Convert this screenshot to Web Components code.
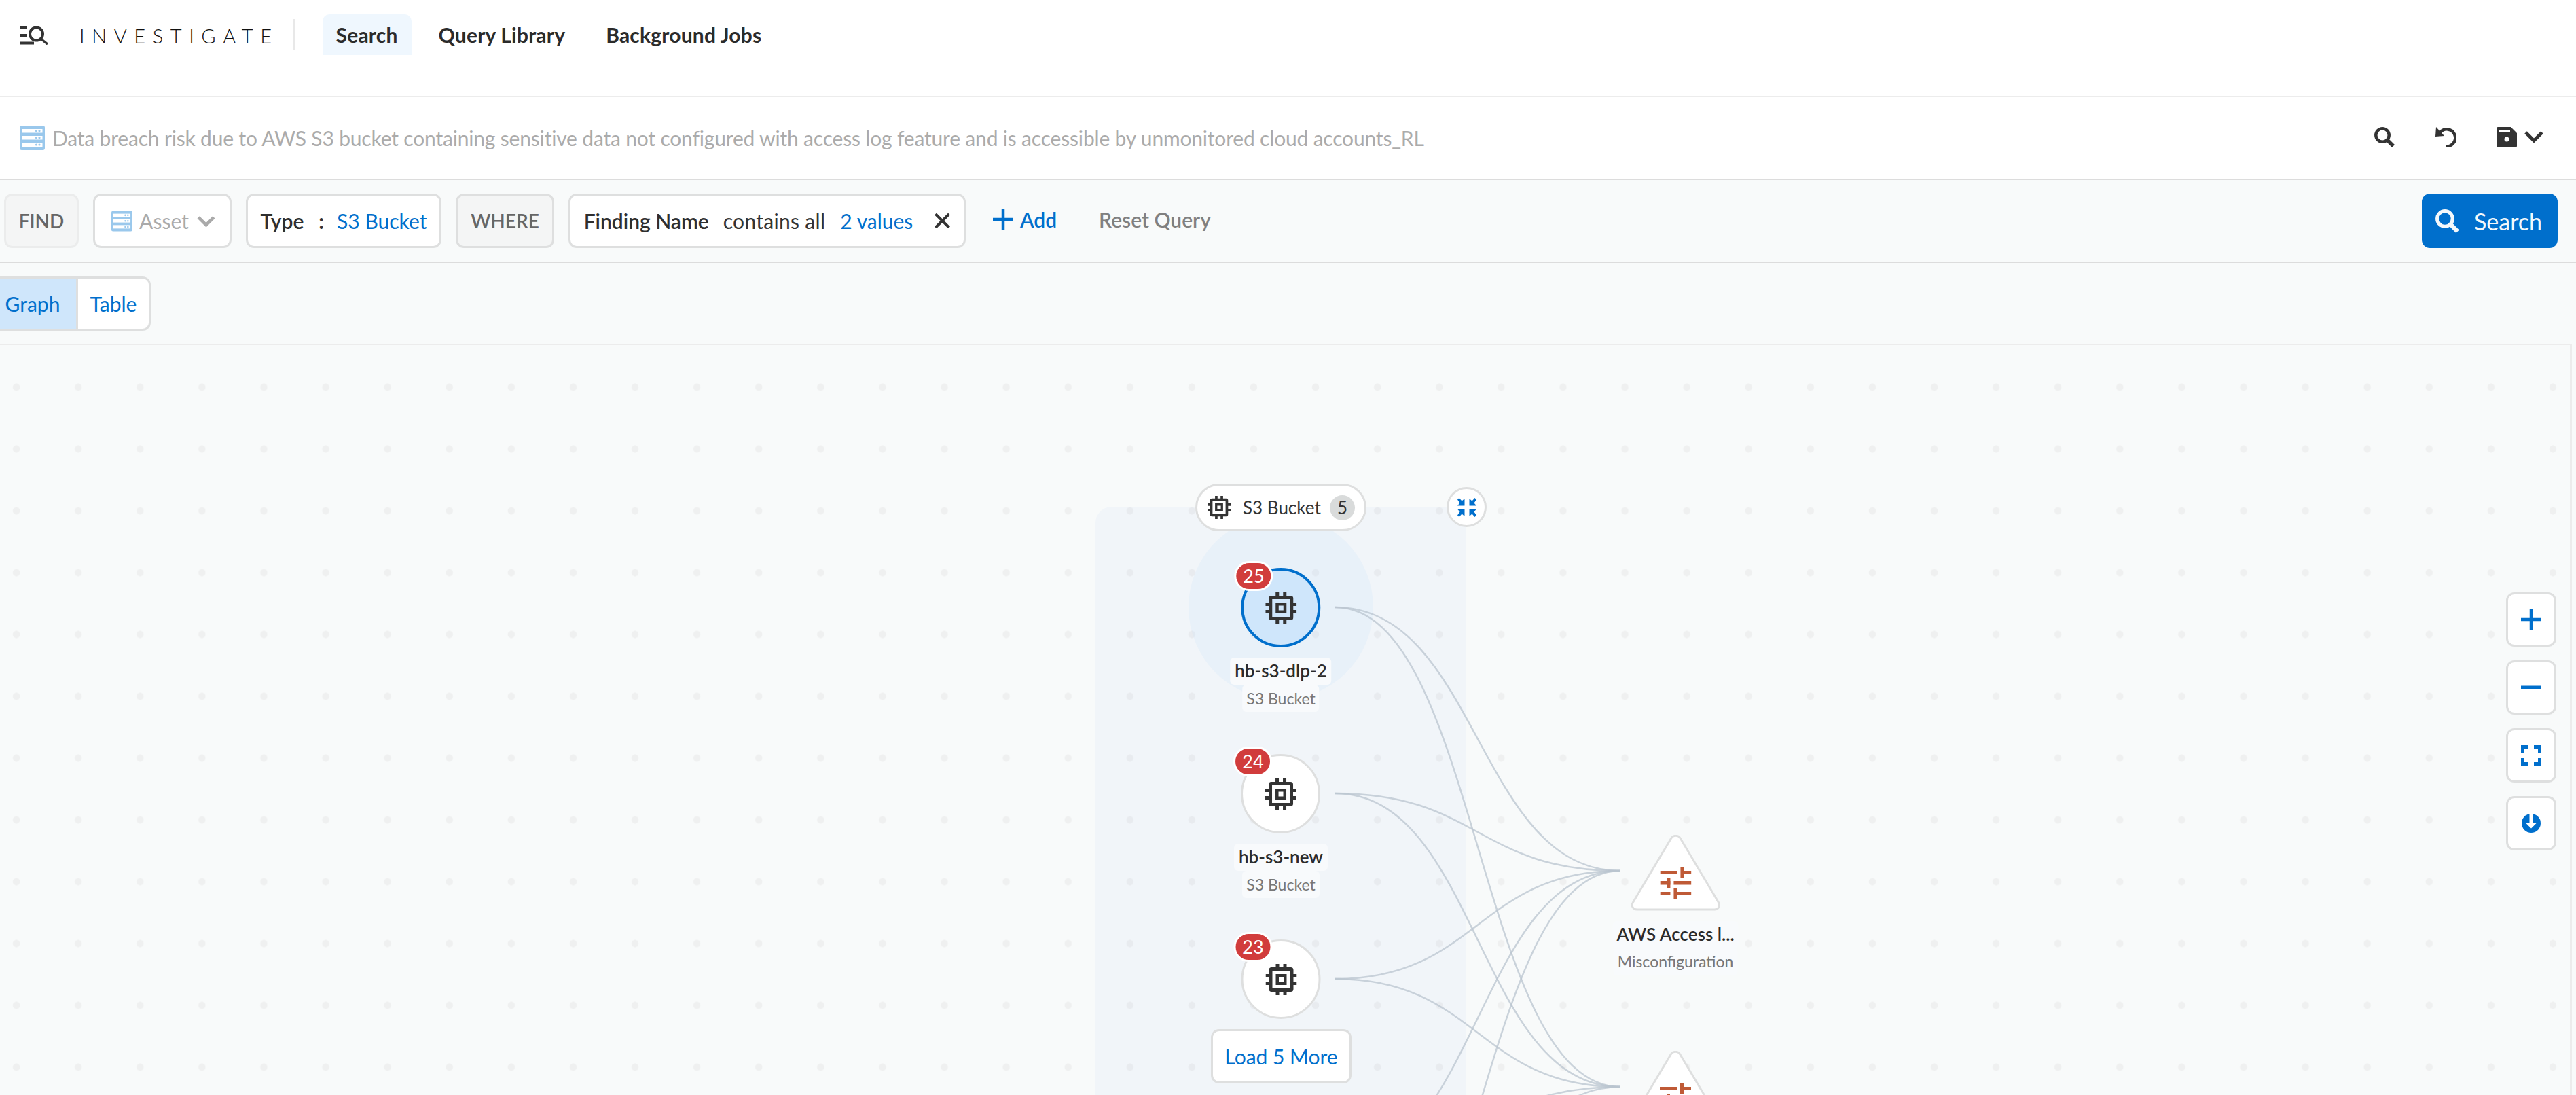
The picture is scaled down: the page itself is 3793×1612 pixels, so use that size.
<!DOCTYPE html>
<html lang="en">
<head>
<meta charset="utf-8">
<title>Investigate</title>
<style>
  html, body { margin: 0; width: 3793px; height: 1612px; overflow: hidden; background: #f8fafa; }
  body { font-family: Lato, "Liberation Sans", sans-serif; color: #333; display: flex; flex-direction: column; }
</style>
</head>
<body>
<inv-nav></inv-nav>
<inv-title-bar>Data breach risk due to AWS S3 bucket containing sensitive data not configured with access log feature and is accessible by unmonitored cloud accounts_RL</inv-title-bar>
<inv-filter-bar></inv-filter-bar>
<inv-view-tabs></inv-view-tabs>
<inv-graph></inv-graph>

<script>
const CHIP_PATH = 'M15 0h5v5h6V0h5v5h6a4 4 0 0 1 4 4v6h5v5h-5v6h5v5h-5v6a4 4 0 0 1-4 4h-6v5h-5v-5h-6v5h-5v-5H9a4 4 0 0 1-4-4v-6H0v-5h5v-6H0v-5h5V9a4 4 0 0 1 4-4h6zM10 10v26h26V10zM15 15h16v16H15zM19.500 19.500v7h7v-7z';

const ICONS = {
  menu: `<svg viewBox="0 0 43 27" fill="none" stroke="currentColor"><path d="M0 2h11M0 13h11M0 24.500h21" stroke-width="4"/><circle cx="24.500" cy="11" r="9.500" stroke-width="4"/><path d="M31 18l10 8" stroke-width="3.500"/></svg>`,
  server: `<svg viewBox="0 0 37 36"><rect width="37" height="36" rx="3" fill="#9ac8ec"/><g fill="#fff"><rect x="3.500" y="5" width="30" height="5.500"/><rect x="3.500" y="15" width="30" height="5.500"/><rect x="3.500" y="25" width="30" height="6"/></g><g fill="#9ac8ec"><circle cx="24.500" cy="7.700" r="1.600"/><circle cx="29" cy="7.700" r="1.600"/><circle cx="24.500" cy="17.700" r="1.600"/><circle cx="29" cy="17.700" r="1.600"/><circle cx="24.500" cy="28" r="1.600"/><circle cx="29" cy="28" r="1.600"/></g></svg>`,
  search: `<svg viewBox="0 0 30 30" fill="none" stroke="currentColor"><circle cx="12" cy="12" r="9.700" stroke-width="4.500"/><path d="M18.500 18.500l9.500 9.500" stroke-width="5.500"/></svg>`,
  undo: `<svg viewBox="0 0 30 30"><path d="M1 0L0 14l13-1z" fill="currentColor"/><path d="M7 8A12.500 12.500 0 1 1 15.500 28.300" fill="none" stroke="currentColor" stroke-width="4.500"/></svg>`,
  save: `<svg viewBox="0 0 30 30"><path d="M2 0h19l9 9v19a2 2 0 0 1-2 2H2a2 2 0 0 1-2-2V2a2 2 0 0 1 2-2z" fill="currentColor"/><rect x="4" y="4" width="16" height="3.500" fill="#fff"/><circle cx="15" cy="18" r="3.500" fill="#fff"/></svg>`,
  chevron: `<svg viewBox="0 0 28 18" fill="none" stroke="currentColor" stroke-width="5"><path d="M2 3l12 12L26 3"/></svg>`,
  close: `<svg viewBox="0 0 23 22" fill="none" stroke="currentColor" stroke-width="4"><path d="M1.500 1l20 20M21.500 1l-20 20"/></svg>`,
  plus: `<svg viewBox="0 0 30 30" fill="none" stroke="currentColor" stroke-width="4.500"><path d="M0 15h30M15 0v30"/></svg>`,
  minus: `<svg viewBox="0 0 30 30" fill="none" stroke="currentColor" stroke-width="5"><path d="M0 15h30"/></svg>`,
  fit: `<svg viewBox="0 0 30 30" fill="none" stroke="currentColor" stroke-width="5"><path d="M11 2.500H2.500V11M19 2.500h8.500V11M11 27.500H2.500V19M19 27.500h8.500V19"/></svg>`,
  download: `<svg viewBox="0 0 28 28"><circle cx="14" cy="14" r="14" fill="currentColor"/><path d="M11.500 0h5v13h6L14 21.500 5.500 13h6z" fill="#fff"/></svg>`,
  chip: `<svg viewBox="0 0 46 46"><path fill="currentColor" fill-rule="evenodd" d="${CHIP_PATH}"/></svg>`,
  collapse: `<svg viewBox="0 0 28 28" fill="currentColor"><path d="M0 2.500L2.500 0l4 4.500L10.500 1v10.500H0l3.500-4zM28 2.500L25.500 0l-4 4.500L17.500 1v10.500H28l-3.500-4zM0 25.500L2.500 28l4-4.500 4 3.500V16.500H0l3.500 4zM28 25.500L25.500 28l-4-4.500-4 3.500V16.500H28l-3.500 4z"/></svg>`,
  sliders: `<svg viewBox="0 0 46 46" fill="currentColor"><rect y="5" width="25" height="5"/><rect x="30" width="5" height="16"/><rect x="35" y="5" width="11" height="5"/><rect y="20" width="15" height="5.500"/><rect x="10" y="15" width="5" height="16"/><rect x="20" y="20" width="26" height="5.500"/><rect y="36" width="15" height="5"/><rect x="20" y="31" width="5" height="15"/><rect x="25" y="36" width="21" height="5"/></svg>`
};

customElements.define('inv-icon', class extends HTMLElement {
  constructor() {
    super();
    this.attachShadow({ mode: 'open' }).innerHTML = `
      <style>
        :host { display: inline-flex; flex: none; width: var(--w, 30px); height: var(--h, 30px); }
        svg { display: block; width: 100%; height: 100%; }
      </style>
      ${ICONS[this.getAttribute('name')] || ''}`;
  }
});

customElements.define('inv-nav', class extends HTMLElement {
  constructor() {
    super();
    this.attachShadow({ mode: 'open' }).innerHTML = `
      <style>
        :host { display: flex; flex: none; align-items: flex-start; height: 141px; background: #fff; border-bottom: 2px solid #ececec; padding-left: 29px; }
        .menu { --w: 43px; --h: 27px; margin-top: 39px; color: #333; }
        .brand { font-size: 29px; font-weight: 300; letter-spacing: 10.600px; line-height: 36px; margin: 35px 0 0 45px; color: #111; }
        .sep { width: 3px; height: 46px; background: #e8e8e8; margin: 28px 40px 0 21px; }
        .tab { font-size: 30px; font-weight: 700; color: #2b2b2b; line-height: 60px; height: 60px; padding: 0 20px; margin: 21px 20px 0 0; border-radius: 10px 10px 0 0; letter-spacing: .2px; }
        .tab.on { background: #eff7fe; }
      </style>
      <inv-icon class="menu" name="menu"></inv-icon>
      <span class="brand">INVESTIGATE</span>
      <span class="sep"></span>
      <span class="tab on">Search</span>
      <span class="tab">Query Library</span>
      <span class="tab">Background Jobs</span>`;
  }
});

customElements.define('inv-title-bar', class extends HTMLElement {
  constructor() {
    super();
    this.attachShadow({ mode: 'open' }).innerHTML = `
      <style>
        :host { display: flex; flex: none; align-items: center; height: 120px; background: #fff; border-bottom: 2px solid #dcdcdc; padding: 0 48px 0 29px; }
        .server { --w: 37px; --h: 36px; margin: 0 11px 0 0; }
        .text { font-size: 30px; color: #ababab; flex: 1; letter-spacing: -.18px; }
        .act { color: #333; margin-left: 60px; margin-top: -2px; }
        .save { margin-right: 11px; }
        .chev { --w: 28px; --h: 18px; color: #333; margin-top: -4px; }
      </style>
      <inv-icon class="server" name="server"></inv-icon>
      <span class="text"><slot></slot></span>
      <inv-icon class="act" name="search"></inv-icon>
      <inv-icon class="act" name="undo"></inv-icon>
      <inv-icon class="act save" name="save"></inv-icon>
      <inv-icon class="chev" name="chevron"></inv-icon>`;
  }
});

customElements.define('inv-chip', class extends HTMLElement {
  constructor() {
    super();
    this.attachShadow({ mode: 'open' }).innerHTML = `
      <style>
        :host { display: inline-flex; flex: none; align-items: center; justify-content: center; height: 80px; box-sizing: border-box; background: #fff; border: 3px solid #dedfdf; border-radius: 12px; font-size: 30px; white-space: pre; }
        :host([muted]) { background: #f4f5f5; color: #666; }
      </style>
      <slot></slot>`;
  }
});

customElements.define('inv-filter-bar', class extends HTMLElement {
  constructor() {
    super();
    this.attachShadow({ mode: 'open' }).innerHTML = `
      <style>
        :host { display: flex; flex: none; align-items: center; gap: 21px; height: 120px; border-bottom: 2px solid #dcdcdc; padding: 0 27px 0 6px; }
        .b { font-weight: 600; color: #2f2f2f; }
        .v { color: #006fcc; }
        .find { border-color: #ebecec; width: 110px; font-weight: 600; font-size: 28px; }
        .where { width: 145px; font-weight: 600; font-size: 28px; }
        .asset { color: #aaa; width: 204px; padding-left: 4px; box-sizing: border-box; }
        .asset inv-icon { --w: 31px; --h: 31px; margin-right: 10px; }
        .asset .c { --w: 29px; --h: 17px; margin: 0 0 0 11px; }
        .type { width: 288px; }
        .colon { font-weight: 700; margin: 0 19px 0 22px; }
        .rule { width: 585px; }
        .op { margin-left: 21px; letter-spacing: .3px; }
        .rule .v { margin-left: 22px; }
        .x { --w: 23px; --h: 22px; color: #333; margin-left: 32px; }
        .add { display: flex; align-items: center; gap: 10px; color: #006fcc; font-size: 30px; font-weight: 600; margin: -4px 0 0 19px; }
        .reset { color: #808080; font-size: 30px; font-weight: 600; margin: -4px 0 0 41px; flex: 1; }
        .go { display: flex; align-items: center; gap: 22px; box-sizing: border-box; width: 200px; height: 80px; padding-left: 20px; background: #006fcc; color: #f4f8fb; border-radius: 12px; font-size: 34px; }
        .go inv-icon { --w: 35px; --h: 35px; }
      </style>
      <inv-chip muted class="find">FIND</inv-chip>
      <inv-chip class="asset"><inv-icon name="server"></inv-icon>Asset<inv-icon class="c" name="chevron"></inv-icon></inv-chip>
      <inv-chip class="type"><span class="b">Type</span><span class="colon">:</span><span class="v">S3 Bucket</span></inv-chip>
      <inv-chip muted class="where">WHERE</inv-chip>
      <inv-chip class="rule"><span class="b">Finding Name</span><span class="op">contains all</span><span class="v">2 values</span><inv-icon class="x" name="close"></inv-icon></inv-chip>
      <span class="add"><inv-icon name="plus"></inv-icon>Add</span>
      <span class="reset">Reset Query</span>
      <span class="go"><inv-icon name="search"></inv-icon>Search</span>`;
  }
});

customElements.define('inv-view-tabs', class extends HTMLElement {
  constructor() {
    super();
    this.attachShadow({ mode: 'open' }).innerHTML = `
      <style>
        :host { display: flex; flex: none; height: 119px; padding-top: 20px; box-sizing: border-box; margin-left: -15px; }
        .tab { display: flex; align-items: center; justify-content: center; height: 80px; box-sizing: border-box; font-size: 30px; color: #006fcc; background: #fff; border: 3px solid #dedfdf; }
        .on { width: 127px; padding-right: 4px; background: #cfe6fb; border-right: 0; border-radius: 12px 0 0 12px; }
        .off { width: 110px; border-radius: 0 12px 12px 0; }
      </style>
      <span class="tab on">Graph</span>
      <span class="tab off">Table</span>`;
  }
});

const ORIGIN_Y = 508;

customElements.define('graph-node', class extends HTMLElement {
  constructor() {
    super();
    const cy = +this.getAttribute('cy');
    const name = this.getAttribute('name');
    const kind = this.getAttribute('kind');
    this.attachShadow({ mode: 'open' }).innerHTML = `
      <style>
        :host { position: absolute; left: 1886px; top: ${cy - 58 - ORIGIN_Y}px; transform: translateX(-50%); display: flex; flex-direction: column; align-items: center; }
        .disc { position: relative; display: flex; align-items: center; justify-content: center; box-sizing: border-box; width: 117px; height: 117px; border-radius: 50%; background: #fff; border: 3px solid #dedfdf; color: #333; }
        :host([selected]) .disc { background: #cfe6fb; border: 4px solid #006fcc; }
        .disc inv-icon { --w: 46px; --h: 46px; }
        .badge { position: absolute; left: -14px; top: -14px; display: flex; align-items: center; justify-content: center; box-sizing: border-box; width: 57px; height: 44px; padding-bottom: 2px; border-radius: 22px; background: #d13c3c; border: 3px solid #fff; color: #fff; font-size: 27px; }
        .label { margin-top: 15px; padding: 0 7px; height: 40px; line-height: 38px; font-size: 26px; font-weight: 600; color: #2b2b2b; background: #f8fafc; border-radius: 6px; white-space: nowrap; }
        .kind { padding: 0 6px; height: 40px; line-height: 40px; font-size: 23px; color: #777; background: #f8fafc; border-radius: 6px; white-space: nowrap; }
      </style>
      <div class="disc"><span class="badge">${this.getAttribute('count')}</span><inv-icon name="chip"></inv-icon></div>
      ${name ? `<div class="label">${name}</div><div class="kind">${kind}</div>` : ''}`;
  }
});

customElements.define('finding-node', class extends HTMLElement {
  constructor() {
    super();
    const cy = +this.getAttribute('cy');
    const name = this.getAttribute('name');
    this.attachShadow({ mode: 'open' }).innerHTML = `
      <style>
        :host { position: absolute; left: 2467px; top: ${cy - 53 - ORIGIN_Y}px; transform: translateX(-50%); display: flex; flex-direction: column; align-items: center; }
        .tri { position: relative; width: 132px; height: 112px; }
        .tri svg { display: block; width: 100%; height: 100%; }
        .tri inv-icon { position: absolute; left: 43px; top: 48px; --w: 46px; --h: 46px; color: #bf5a36; }
        .label { margin-top: 15px; padding: 0 6px; height: 40px; line-height: 38px; font-size: 26px; font-weight: 600; color: #2b2b2b; background: #f8fafc; border-radius: 6px; white-space: nowrap; }
        .kind { padding: 0 6px; height: 40px; line-height: 38px; font-size: 23px; color: #777; background: #f8fafc; border-radius: 6px; white-space: nowrap; }
      </style>
      <div class="tri">
        <svg viewBox="0 0 132 112"><path d="M59 5.500a8 8 0 0 1 14 0l56 94c3 5 0 10.500-6 10.500H9c-6 0-9-5.500-6-10.500z" fill="#fff" stroke="#dedfdf" stroke-width="3"/></svg>
        <inv-icon name="sliders"></inv-icon>
      </div>
      ${name ? `<div class="label">${name}</div><div class="kind">${this.getAttribute('kind')}</div>` : ''}`;
  }
});

customElements.define('inv-graph', class extends HTMLElement {
  constructor() {
    super();
    const from = [894, 1168, 1441, 1715, 1988];
    const to = [1282, 1600];
    const [x0, x1] = [1966, 2386];
    const mx = (x0 + x1) / 2;
    const edges = from.flatMap(a => to.map(b => {
      const [y0, y1] = [a - ORIGIN_Y, b - ORIGIN_Y];
      return `<path d="M${x0} ${y0}C${mx} ${y0} ${mx} ${y1} ${x1} ${y1}"/>`;
    })).join('');

    this.attachShadow({ mode: 'open' }).innerHTML = `
      <style>
        :host { display: block; position: relative; flex: 1; width: 3784px; border-top: 2px solid #ececec; border-right: 3px solid #ececec; overflow: hidden;
          background: radial-gradient(circle at center, #eff0f0 0 5px, transparent 5.600px) -21.450px 16.500px / 91.100px 91px; }
        .panel { position: absolute; left: 1613px; top: ${746 - ORIGIN_Y}px; width: 546px; height: 1000px; background: rgba(133, 167, 233, .06); border-radius: 24px 0 0 0; }
        .halo { position: absolute; left: 1750px; top: ${758 - ORIGIN_Y}px; width: 272px; height: 272px; border-radius: 50%; background: rgba(201, 225, 249, .2); }
        svg.edges { position: absolute; left: 0; top: 0; width: 3784px; height: 1104px; fill: none; stroke: #b9c4cf; stroke-width: 2.500px; stroke-opacity: .75; }
        .group { position: absolute; left: 1760px; top: ${712 - ORIGIN_Y}px; display: flex; align-items: center; box-sizing: border-box; width: 252px; height: 70px; padding: 0 14px 0 15px; background: #fff; border: 3px solid #dedfdf; border-radius: 35px; font-size: 26px; color: #333; }
        .group inv-icon { --w: 34px; --h: 34px; margin-right: 18px; color: #333; }
        .group b { font-weight: 400; flex: 1; white-space: nowrap; }
        .group i { display: flex; align-items: center; justify-content: center; width: 37px; height: 37px; border-radius: 50%; background: #d9dbdb; font-style: normal; }
        .collapse { position: absolute; left: 2130px; top: ${717 - ORIGIN_Y}px; display: flex; align-items: center; justify-content: center; box-sizing: border-box; width: 59px; height: 59px; border-radius: 50%; background: #fff; border: 3px solid #dedfdf; color: #006fcc; }
        .collapse inv-icon { --w: 28px; --h: 28px; }
        .more { position: absolute; left: 1783px; top: ${1515 - ORIGIN_Y}px; display: flex; align-items: center; justify-content: center; box-sizing: border-box; width: 207px; height: 80px; background: #fff; border: 3px solid #dedfdf; border-radius: 12px; font-size: 30px; color: #006fcc; }
        .tools { position: absolute; left: 3690px; top: ${872 - ORIGIN_Y}px; display: flex; flex-direction: column; gap: 20px; }
        .tools span { display: flex; align-items: center; justify-content: center; box-sizing: border-box; width: 74px; height: 80px; background: #fff; border: 3px solid #dedfdf; border-radius: 12px; color: #006fcc; }
        .tools .dl { --w: 28px; --h: 28px; }
      </style>
      <div class="panel"></div>
      <div class="halo"></div>
      <svg class="edges" viewBox="0 0 3784 1104">${edges}</svg>
      <graph-node cy="894" count="25" name="hb-s3-dlp-2" kind="S3 Bucket" selected></graph-node>
      <graph-node cy="1168" count="24" name="hb-s3-new" kind="S3 Bucket"></graph-node>
      <graph-node cy="1441" count="23"></graph-node>
      <finding-node cy="1282" name="AWS Access l..." kind="Misconfiguration"></finding-node>
      <finding-node cy="1600"></finding-node>
      <div class="group"><inv-icon name="chip"></inv-icon><b>S3 Bucket</b><i>5</i></div>
      <div class="collapse"><inv-icon name="collapse"></inv-icon></div>
      <div class="more">Load 5 More</div>
      <div class="tools">
        <span><inv-icon name="plus"></inv-icon></span>
        <span><inv-icon name="minus"></inv-icon></span>
        <span><inv-icon name="fit"></inv-icon></span>
        <span><inv-icon class="dl" name="download"></inv-icon></span>
      </div>`;
  }
});
</script>
</body>
</html>
